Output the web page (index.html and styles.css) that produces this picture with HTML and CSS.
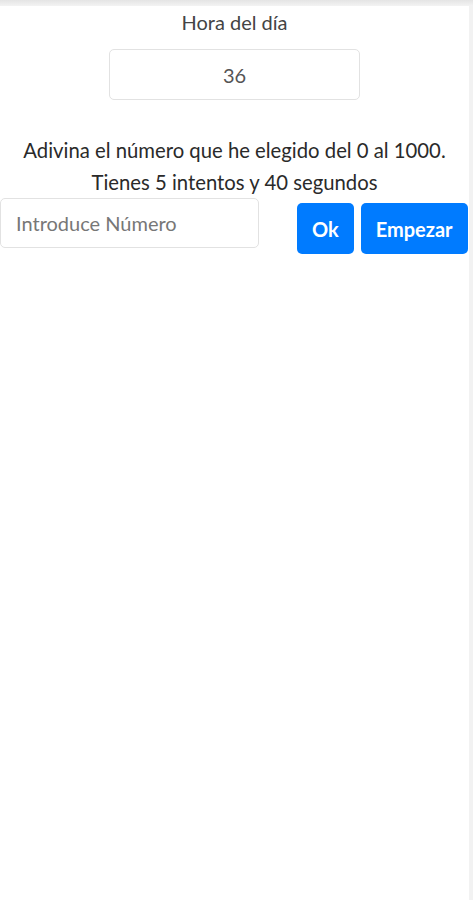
FILE: index.html
```html
<!DOCTYPE html>
<html lang="es">
<head>
    <meta charset="UTF-8">
    <meta name="viewport" content="width=device-width, initial-scale=1.0">
    <title>Adivina el número</title>
    <link rel="stylesheet" href="styles.css">
</head>
<body>

<div class="topbar"></div>

<div class="page">
    <div class="title">Hora del día</div>
    <div class="clock">36</div>

    <p class="intro">Adivina el número que he elegido del 0 al 1000.<br>Tienes 5 intentos y 40 segundos</p>

    <div class="controls">
        <input type="text" class="guess" placeholder="Introduce Número">
        <div class="buttons">
            <button class="btn">Ok</button>
            <button class="btn">Empezar</button>
        </div>
    </div>
</div>

</body>
</html>
```

FILE: styles.css
```css
body {
    margin: 0;
    padding: 0;
    font-family: Lato, "Open Sans", sans-serif;
    background-color: #fff;
    color: #333;
}
.topbar {
    height: 6px;
    background: linear-gradient(#e4e4e4, #f3f3f3);
}
.page {
    min-height: 894px;
    border-right: 4px solid #f2f2f2;
    box-sizing: border-box;
}
.title {
    text-align: center;
    font-size: 20px;
    line-height: 22px;
    padding-top: 5px;
    color: #444;
}
.clock {
    width: 251px;
    height: 51px;
    margin: 16px auto 0;
    box-sizing: border-box;
    border: 1px solid #e2e2e2;
    border-radius: 5px;
    display: flex;
    align-items: center;
    justify-content: center;
    font-size: 20px;
    color: #555;
}
.intro {
    margin: 34px 0 0;
    text-align: center;
    font-size: 20.3px;
    line-height: 32px;
    color: #2a2a2a;
}
.controls {
    display: flex;
    align-items: flex-start;
}
.guess {
    width: 259px;
    height: 50px;
    box-sizing: border-box;
    border: 1px solid #e2e2e2;
    border-radius: 5px;
    padding: 0 15px;
    font-family: inherit;
    font-size: 20px;
    color: #333;
    margin-right: 38px;
}
.guess::placeholder {
    color: #777;
}
.buttons {
    display: flex;
    gap: 7px;
    margin-top: 5px;
}
.btn {
    height: 51px;
    border: none;
    border-radius: 5px;
    background-color: #007bff;
    color: white;
    font-family: inherit;
    font-size: 20px;
    font-weight: 700;
    padding: 0 15px;
}
```
